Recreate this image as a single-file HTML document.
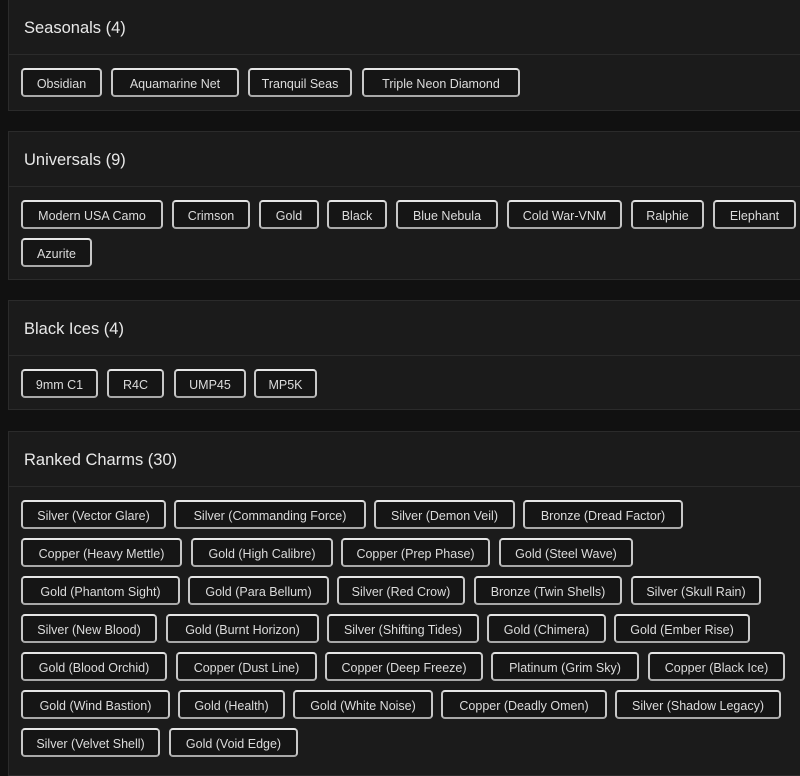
<!DOCTYPE html>
<html><head><meta charset="utf-8"><style>
body{margin:0;background:#111;width:800px;height:770px;overflow:hidden;position:relative;font-family:"Liberation Sans",sans-serif;}
.card{position:absolute;left:8px;width:800px;background:#1b1b1b;border:1px solid #2b2b2b;box-sizing:border-box;}
.h{height:55px;border-bottom:1px solid #2b2b2b;box-sizing:border-box;color:#e8e8e8;font-size:16.5px;line-height:56px;padding-left:15px;}
.c{position:absolute;height:29px;box-sizing:border-box;border:2px solid #c8c8c8;border-top-color:#e6e6e6;border-bottom-color:#a8a8a8;border-radius:4px;background:#151515;color:#dcdcdc;font-size:12.5px;line-height:28px;text-align:center;white-space:nowrap;}
</style></head><body>
<div class="card" style="top:-1px;height:112px"><div class="h">Seasonals (4)</div>
<div class="c" style="left:12px;top:68px;width:81px">Obsidian</div>
<div class="c" style="left:102px;top:68px;width:128px">Aquamarine Net</div>
<div class="c" style="left:239px;top:68px;width:104px">Tranquil Seas</div>
<div class="c" style="left:353px;top:68px;width:158px">Triple Neon Diamond</div>
</div>
<div class="card" style="top:131px;height:149px"><div class="h">Universals (9)</div>
<div class="c" style="left:12px;top:68px;width:142px">Modern USA Camo</div>
<div class="c" style="left:163px;top:68px;width:78px">Crimson</div>
<div class="c" style="left:250px;top:68px;width:60px">Gold</div>
<div class="c" style="left:318px;top:68px;width:60px">Black</div>
<div class="c" style="left:387px;top:68px;width:102px">Blue Nebula</div>
<div class="c" style="left:498px;top:68px;width:115px">Cold War-VNM</div>
<div class="c" style="left:622px;top:68px;width:73px">Ralphie</div>
<div class="c" style="left:704px;top:68px;width:83px">Elephant</div>
<div class="c" style="left:12px;top:106px;width:71px">Azurite</div>
</div>
<div class="card" style="top:300px;height:110px"><div class="h">Black Ices (4)</div>
<div class="c" style="left:12px;top:68px;width:77px">9mm C1</div>
<div class="c" style="left:98px;top:68px;width:57px">R4C</div>
<div class="c" style="left:165px;top:68px;width:72px">UMP45</div>
<div class="c" style="left:245px;top:68px;width:63px">MP5K</div>
</div>
<div class="card" style="top:431px;height:345px"><div class="h">Ranked Charms (30)</div>
<div class="c" style="left:12px;top:68px;width:145px">Silver (Vector Glare)</div>
<div class="c" style="left:165px;top:68px;width:192px">Silver (Commanding Force)</div>
<div class="c" style="left:365px;top:68px;width:141px">Silver (Demon Veil)</div>
<div class="c" style="left:514px;top:68px;width:160px">Bronze (Dread Factor)</div>
<div class="c" style="left:12px;top:106px;width:161px">Copper (Heavy Mettle)</div>
<div class="c" style="left:182px;top:106px;width:142px">Gold (High Calibre)</div>
<div class="c" style="left:332px;top:106px;width:149px">Copper (Prep Phase)</div>
<div class="c" style="left:490px;top:106px;width:134px">Gold (Steel Wave)</div>
<div class="c" style="left:12px;top:144px;width:159px">Gold (Phantom Sight)</div>
<div class="c" style="left:179px;top:144px;width:141px">Gold (Para Bellum)</div>
<div class="c" style="left:328px;top:144px;width:128px">Silver (Red Crow)</div>
<div class="c" style="left:465px;top:144px;width:148px">Bronze (Twin Shells)</div>
<div class="c" style="left:622px;top:144px;width:130px">Silver (Skull Rain)</div>
<div class="c" style="left:12px;top:182px;width:136px">Silver (New Blood)</div>
<div class="c" style="left:157px;top:182px;width:153px">Gold (Burnt Horizon)</div>
<div class="c" style="left:318px;top:182px;width:152px">Silver (Shifting Tides)</div>
<div class="c" style="left:478px;top:182px;width:119px">Gold (Chimera)</div>
<div class="c" style="left:605px;top:182px;width:136px">Gold (Ember Rise)</div>
<div class="c" style="left:12px;top:220px;width:146px">Gold (Blood Orchid)</div>
<div class="c" style="left:167px;top:220px;width:141px">Copper (Dust Line)</div>
<div class="c" style="left:316px;top:220px;width:158px">Copper (Deep Freeze)</div>
<div class="c" style="left:482px;top:220px;width:148px">Platinum (Grim Sky)</div>
<div class="c" style="left:639px;top:220px;width:137px">Copper (Black Ice)</div>
<div class="c" style="left:12px;top:258px;width:149px">Gold (Wind Bastion)</div>
<div class="c" style="left:169px;top:258px;width:107px">Gold (Health)</div>
<div class="c" style="left:284px;top:258px;width:140px">Gold (White Noise)</div>
<div class="c" style="left:432px;top:258px;width:166px">Copper (Deadly Omen)</div>
<div class="c" style="left:606px;top:258px;width:166px">Silver (Shadow Legacy)</div>
<div class="c" style="left:12px;top:296px;width:139px">Silver (Velvet Shell)</div>
<div class="c" style="left:160px;top:296px;width:129px">Gold (Void Edge)</div>
</div>
</body></html>
